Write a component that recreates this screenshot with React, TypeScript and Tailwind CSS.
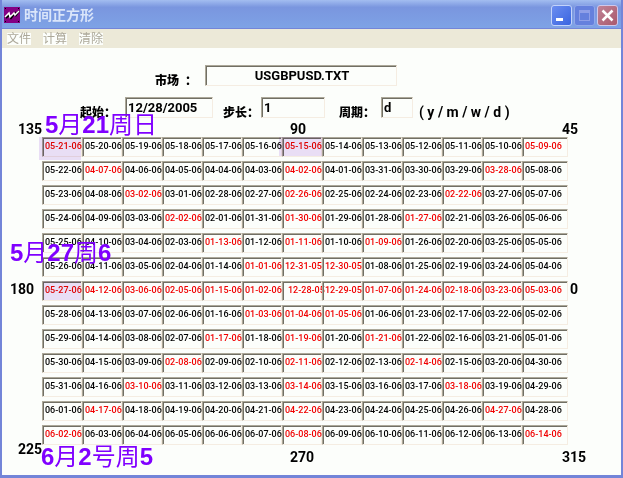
import type { ReactNode } from 'react'

const MARKS = {
  topLeft: '-left-1 -top-px right-0 -bottom-1',
  top: '-left-1 -top-px -right-px bottom-0',
  left: 'left-0 -top-px right-0 bottom-0',
}

// A leading * marks a date on one of the axes or diagonals
const rows = [
  '*05-21-06 05-20-06 05-19-06 05-18-06 05-17-06 05-16-06 *05-15-06 05-14-06 05-13-06 05-12-06 05-11-06 05-10-06 *05-09-06',
  '05-22-06 *04-07-06 04-06-06 04-05-06 04-04-06 04-03-06 *04-02-06 04-01-06 03-31-06 03-30-06 03-29-06 *03-28-06 05-08-06',
  '05-23-06 04-08-06 *03-02-06 03-01-06 02-28-06 02-27-06 *02-26-06 02-25-06 02-24-06 02-23-06 *02-22-06 03-27-06 05-07-06',
  '05-24-06 04-09-06 03-03-06 *02-02-06 02-01-06 01-31-06 *01-30-06 01-29-06 01-28-06 *01-27-06 02-21-06 03-26-06 05-06-06',
  '05-25-06 04-10-06 03-04-06 02-03-06 *01-13-06 01-12-06 *01-11-06 01-10-06 *01-09-06 01-26-06 02-20-06 03-25-06 05-05-06',
  '05-26-06 04-11-06 03-05-06 02-04-06 01-14-06 *01-01-06 *12-31-05 *12-30-05 01-08-06 01-25-06 02-19-06 03-24-06 05-04-06',
  '*05-27-06 *04-12-06 *03-06-06 *02-05-06 *01-15-06 *01-02-06 *12-28-05 *12-29-05 *01-07-06 *01-24-06 *02-18-06 *03-23-06 *05-03-06',
  '05-28-06 04-13-06 03-07-06 02-06-06 01-16-06 *01-03-06 *01-04-06 *01-05-06 01-06-06 01-23-06 02-17-06 03-22-06 05-02-06',
  '05-29-06 04-14-06 03-08-06 02-07-06 *01-17-06 01-18-06 *01-19-06 01-20-06 *01-21-06 01-22-06 02-16-06 03-21-06 05-01-06',
  '05-30-06 04-15-06 03-09-06 *02-08-06 02-09-06 02-10-06 *02-11-06 02-12-06 02-13-06 *02-14-06 02-15-06 03-20-06 04-30-06',
  '05-31-06 04-16-06 *03-10-06 03-11-06 03-12-06 03-13-06 *03-14-06 03-15-06 03-16-06 03-17-06 *03-18-06 03-19-06 04-29-06',
  '06-01-06 *04-17-06 04-18-06 04-19-06 04-20-06 04-21-06 *04-22-06 04-23-06 04-24-06 04-25-06 04-26-06 *04-27-06 04-28-06',
  '*06-02-06 06-03-06 06-04-06 06-05-06 06-06-06 06-07-06 *06-08-06 06-09-06 06-10-06 06-11-06 06-12-06 06-13-06 *06-14-06',
].map((row) => row.split(' '))

const highlights: Record<string, string> = {
  '*05-21-06': MARKS.topLeft,
  '*05-15-06': MARKS.top,
  '*05-27-06': MARKS.left,
}

const sunken =
  'border border-t-[#aca899] border-l-[#aca899] border-r-[#f5ede2] border-b-[#f5ede2] shadow-[inset_1px_1px_0_#716f64]'

function AppIcon() {
  return (
    <svg width="16" height="16" viewBox="0 0 16 16" aria-hidden="true">
      <rect width="16" height="16" fill="#840084" />
      <path d="M2 11l3-3 2 3 4-5 1 2 3-4" fill="none" stroke="#000" strokeWidth="2" />
      <path d="M1 10l4-4 1 4 4-4 1 2 4-4" fill="none" stroke="#fff" strokeWidth="1.5" />
      <path d="M1 1h1v1H1zM14 1h1v1h-1zM1 14h1v1H1zM14 14h1v1h-1z" fill="#000" />
    </svg>
  )
}

function TitleBar() {
  const button = 'flex size-[21px] items-center justify-center rounded-[3px] border'
  return (
    <header className="flex h-[29px] items-center bg-linear-to-b from-[#a3bdf0] via-[#7a96df] via-25% to-[#7ea3e6] pt-px pr-[3px] pl-[2px] shadow-[inset_0_-1px_0_#7385d8]">
      <AppIcon />
      <h1 className="ml-1 flex-1 text-[14px] leading-5 font-bold text-[#dae5fa]">时间正方形</h1>
      <div className="flex gap-[2px]">
        <button type="button" aria-label="最小化" className={`${button} border-[#c3d3fb] bg-linear-to-br from-[#6b8df0] to-[#3a64e0]`}>
          <svg width="19" height="19" viewBox="0 0 19 19"><path d="M4 12h7v3H4z" fill="#fff" /></svg>
        </button>
        <button type="button" aria-label="最大化" disabled className={`${button} border-[#91a8ea] bg-[#6580dd]`}>
          <svg width="19" height="19" viewBox="0 0 19 19"><path d="M4 4h11v11H4zM5 7v7h9V7z" fillRule="evenodd" fill="#8f9fe8" /></svg>
        </button>
        <button type="button" aria-label="关闭" className={`${button} border-[#d0c8ea] bg-linear-to-br from-[#c08397] to-[#a9596c]`}>
          <svg width="19" height="19" viewBox="0 0 19 19"><path d="M4.5 4.5l10 10M14.5 4.5l-10 10" stroke="#fff" strokeWidth="2.5" /></svg>
        </button>
      </div>
    </header>
  )
}

function MenuBar() {
  return (
    <nav className="flex h-[19px] items-center gap-3 bg-[#ece9d8] pl-[5px]">
      {['文件', '计算', '清除'].map((item) => (
        <button key={item} type="button" className="bg-[#fcfefb] text-[12px] leading-3 text-[#aca899]">
          {item}
        </button>
      ))}
    </nav>
  )
}

function Field({ id, label, value, labelClass, className }: {
  id: string
  label: string
  value: string
  labelClass: string
  className: string
}) {
  return (
    <>
      <label htmlFor={id} className={`shrink-0 self-end text-[12px] leading-[10px] font-black whitespace-pre ${labelClass}`}>
        {label}
      </label>
      <input id={id} defaultValue={value} className={`h-[21px] min-w-0 pb-px pl-[2px] text-[13px] font-bold ${sunken} ${className}`} />
    </>
  )
}

function Note({ className, children }: { className: string; children: string }) {
  return (
    <p className={`absolute z-10 text-[24px] leading-6 whitespace-nowrap text-[#8000ff] ${className}`}>
      {children.split(/(\d+)/).map((part, i) => (
        <span key={i} className={/\d/.test(part) ? "font-['Liberation_Sans'] font-bold" : 'font-normal'}>
          {part}
        </span>
      ))}
    </p>
  )
}

function Angle({ className = '', children }: { className?: string; children: ReactNode }) {
  return <span className={`text-[14px] leading-4 font-bold ${className}`}>{children}</span>
}

function DateCell({ date }: { date: string }) {
  const marked = date.startsWith('*')
  return (
    <td className="p-0 pb-1">
      <div className={`relative h-5 pt-[3px] text-[9px] leading-[10px] font-medium whitespace-nowrap ${sunken} ${marked ? 'text-[#f00000]' : ''} ${date === '*12-28-05' ? 'pl-[5px]' : 'pl-[2px]'}`}>
        {date.replace('*', '')}
        {highlights[date] && <span className={`absolute bg-[#ecdff9] mix-blend-multiply ${highlights[date]}`} />}
      </div>
    </td>
  )
}

export default function App() {
  return (
    <div className="flex min-h-screen flex-col overflow-hidden border-r-2 border-b-[3px] border-l-2 border-[#7385d8] bg-[#fcfefb] font-[Roboto,'Noto_Sans_CJK_SC',sans-serif] text-black">
      <TitleBar />
      <MenuBar />
      <main className="flex-1 pt-[17px]">
        <div className="flex">
          <Field id="market" label="市场  ：" value="USGBPUSD.TXT" labelClass="ml-[153px] w-[50px]" className="w-[192px] text-center" />
        </div>
        <div className="mt-[11px] flex">
          <Field id="start" label="起始：" value="12/28/2005" labelClass="ml-[78px] w-[45px]" className="w-[88px]" />
          <Field id="step" label="步长：" value="1" labelClass="ml-[10px] w-[38px]" className="w-[64px]" />
          <Field id="period" label="周期：" value="d" labelClass="ml-[14px] w-[42px]" className="w-[32px]" />
          <span className="ml-[6px] self-end text-[14px] leading-[11px] font-bold whitespace-nowrap">( y / m / w / d )</span>
        </div>

        <div className="relative mt-[3px] flex justify-between pr-[43px] pl-4">
          <Angle>135</Angle>
          <Angle className="pr-2">90</Angle>
          <Angle>45</Angle>
          <Note className="bottom-0 left-[43px]">5月21周日</Note>
        </div>
        <div className="relative flex items-center">
          <Angle className="w-10 shrink-0 pb-2 pl-2">180</Angle>
          <div className="min-w-0 flex-1">
            <table className="w-full table-fixed border-collapse">
              <colgroup>
                <col span={12} />
                <col className="w-[46px]" />
              </colgroup>
              <tbody>
                {rows.map((row) => (
                  <tr key={row[0]}>
                    {row.map((date) => (
                      <DateCell key={date} date={date} />
                    ))}
                  </tr>
                ))}
              </tbody>
            </table>
          </div>
          <Angle className="w-[53px] shrink-0 pb-2 pl-[2px]">0</Angle>
          <Note className="top-[104px] left-2">5月27周6</Note>
        </div>
        <div className="relative -mt-2 flex items-start justify-between pr-[35px] pl-4">
          <Angle>225</Angle>
          <Angle className="pt-2">270</Angle>
          <Angle className="pt-2">315</Angle>
          <Note className="top-1 left-[39px]">6月2号周5</Note>
        </div>
      </main>
    </div>
  )
}
